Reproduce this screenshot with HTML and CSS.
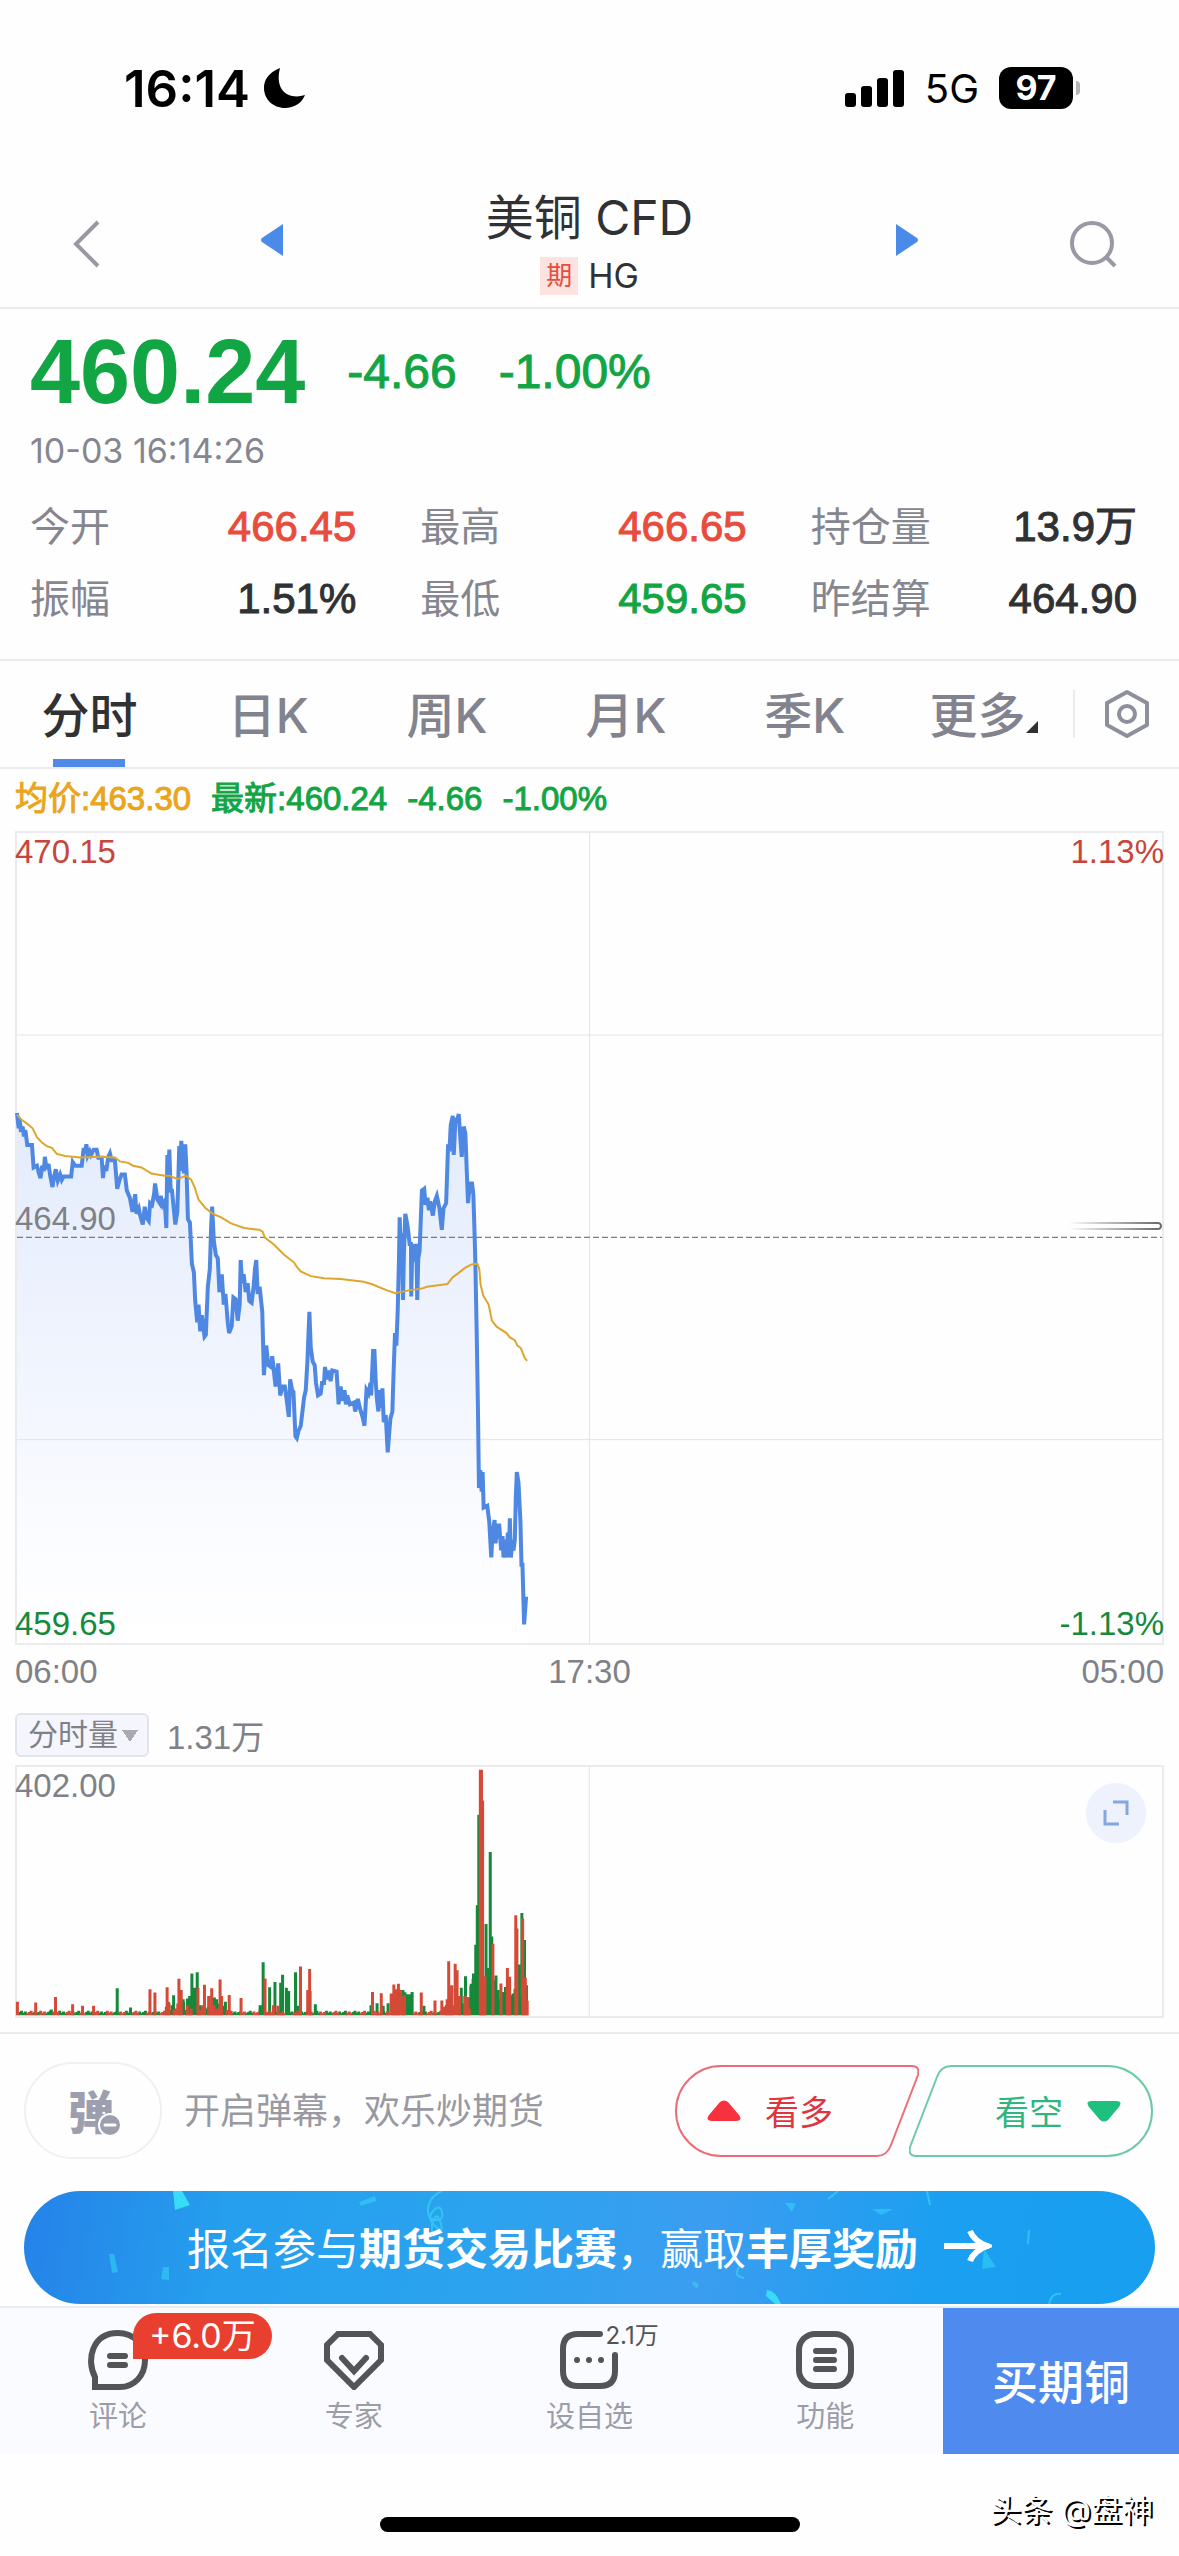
FILE: index.html
```html
<!DOCTYPE html>
<html lang="zh-CN">
<head>
    <meta charset="utf-8">
    <meta name="viewport" content="width=device-width">
    <title>美铜 CFD</title>

    <link rel="stylesheet" href="styles.css">
</head>
<body>

<div class="status-bar">
    <div class="status-time">
        16:14
        <svg width="42" height="40" viewBox="0 0 42 40"><path d="M16 0C4 5 0 12 0 20c0 11 9 20 21 20 9 0 17-5 20-13-15 5-31-3-25-27z"/></svg>
    </div>
    <div class="status-right">
        <svg width="60" height="38" viewBox="0 0 60 38"><rect y="24" width="11" height="14" rx="3"/><rect x="16" y="17" width="11" height="21" rx="3"/><rect x="32" y="9" width="11" height="29" rx="3"/><rect x="48" y="1" width="11" height="37" rx="3"/></svg>
        <span>5G</span>
        <span class="battery">97</span>
    </div>
</div>

<header class="header">
    <button class="icon-button" aria-label="返回">
        <svg width="30" height="48" viewBox="0 0 30 48" fill="none" stroke="#9999a6" stroke-width="4"><path d="M27 2 5 24l22 22"/></svg>
    </button>
    <div class="switcher">
        <button aria-label="上一个">
            <svg width="24" height="32" viewBox="0 0 24 32"><path fill="#4a8ae8" d="M22 0v32L1 18q-2-2 0-4z"/></svg>
        </button>
        <div class="title">
            <h1>美铜 CFD</h1>
            <div class="title-code"><span class="title-tag">期</span>HG</div>
        </div>
        <button aria-label="下一个">
            <svg width="24" height="32" viewBox="0 0 24 32"><path fill="#4a8ae8" d="M2 0v32l21-14q2-2 0-4z"/></svg>
        </button>
    </div>
    <button class="icon-button" aria-label="搜索">
        <svg width="48" height="48" viewBox="0 0 48 48" fill="none" stroke="#9999a6" stroke-width="4"><circle cx="23" cy="23" r="20"/><path d="m37 37 9 9"/></svg>
    </button>
</header>

<section class="quote">
    <div class="quote-price green">
        <strong>460.24</strong>
        <span>-4.66</span>
        <span>-1.00%</span>
    </div>
    <div class="quote-date">10-03 16:14:26</div>
    <dl class="stats">
        <div><dt>今开</dt><dd class="red">466.45</dd></div>
        <div><dt>最高</dt><dd class="red">466.65</dd></div>
        <div><dt>持仓量</dt><dd>13.9万</dd></div>
        <div><dt>振幅</dt><dd>1.51%</dd></div>
        <div><dt>最低</dt><dd class="green">459.65</dd></div>
        <div><dt>昨结算</dt><dd>464.90</dd></div>
    </dl>
</section>

<nav class="tabs">
    <button class="tab active">分时</button>
    <button class="tab">日K</button>
    <button class="tab">周K</button>
    <button class="tab">月K</button>
    <button class="tab">季K</button>
    <button class="tab tab-more">更多</button>
    <button class="tab-settings" aria-label="设置">
        <svg width="46" height="50" viewBox="0 0 46 50" fill="none" stroke="#8d8f9c" stroke-width="4"><path stroke-linejoin="round" d="m23 3 20 11v22L23 47 3 36V14z"/><circle cx="23" cy="25" r="8"/></svg>
    </button>
</nav>

<main class="charts">
    <div class="legend">
        <span class="orange">均价:463.30</span>
        <span class="green">最新:460.24</span>
        <span class="green">-4.66</span>
        <span class="green">-1.00%</span>
    </div>

    <div class="chart price-chart">
        <svg class="chart-svg" viewBox="0 0 3450 2274" preserveAspectRatio="none">
            <defs>
                <linearGradient id="area" x1="0" y1="0" x2="0" y2="1">
                    <stop offset="0" stop-color="#e3ebfc"/>
                    <stop offset="0.500" stop-color="#f1f5fe"/>
                    <stop offset="0.800" stop-color="#fbfcff"/>
                    <stop offset="1" stop-color="#fff"/>
                </linearGradient>
            </defs>
            <g transform="translate(-45 694)">
                <path fill="url(#area)" d="M45 92 70 140 76 182 90 182 95 245 116 275 129 215 152 300 162 250 186 270 208 270 213 230 240 240 246 190 285 195 304 275 325 205 340 225 347 305 370 265 393 370 424 405 461 290 490 340 495 415 504 195 522 405 540 170 552 180 560 390 582 620 610 720 633 355 655 595 684 710 697 610 710 675 719 505 745 620 766 505 784 650 789 828 810 805 824 860 852 860 864 945 868 840 888 1005 910 890 926 650 952 885 973 805 1008 818 1014 910 1048 910 1092 970 1118 760 1134 930 1146 865 1162 1045 1176 930 1192 650 1198 385 1208 617 1215 375 1233 607 1251 617 1265 310 1298 380 1310 325 1325 420 1338 345 1344 180 1358 100 1361 210 1376 95 1385 215 1391 130 1404 345 1420 320 1437 1145 1451 1200 1462 1195 1474 1340 1484 1235 1511 1340 1541 1320 1551 1100 1562 1240 1573 1528 1579 1450V1580H45z"/>
            </g>
            <g class="grid">
                <path d="M0 567H3450M0 1703H3450M1725 0V2274"/>
                <path class="grid-base" d="M0 1135H3450"/>
            </g>
            <g class="lines" transform="translate(-45 694)">
                <polyline class="line-price" points="45,92 50,135 53,110 57,145 62,130 66,158 70,140 76,182 90,182 95,245 105,240 110,258 116,275 121,240 126,255 129,215 134,250 140,235 145,268 152,300 157,270 162,250 168,282 175,265 180,280 186,270 208,270 213,230 220,240 240,240 246,190 250,205 254,180 258,212 264,200 268,210 276,195 285,195 290,218 300,218 304,275 308,240 314,255 320,215 325,205 330,225 340,225 347,305 354,280 360,265 370,265 376,310 385,330 393,370 401,320 405,375 412,360 416,380 424,405 430,355 434,385 442,395 446,345 452,350 458,320 461,290 468,335 475,345 478,325 484,350 490,340 495,415 498,210 501,260 504,195 508,310 512,310 522,405 528,370 534,185 537,240 540,170 543,255 546,180 548,262 552,180 556,260 560,390 566,400 572,515 578,540 582,620 588,680 592,630 597,705 602,660 610,720 614,715 620,580 626,530 630,410 633,355 638,450 644,490 650,500 655,595 662,545 668,630 673,600 680,680 684,710 692,690 697,610 704,615 710,675 716,630 719,505 723,570 728,545 734,595 740,570 745,620 752,625 758,580 762,530 766,505 770,600 776,580 784,650 789,828 796,745 802,800 810,805 814,775 824,860 832,795 838,885 845,860 852,860 858,900 864,945 868,840 874,870 878,875 884,1000 888,1005 893,985 900,970 905,930 910,890 915,870 920,790 926,650 930,750 936,790 942,800 946,850 952,885 960,880 964,850 970,850 973,805 978,840 984,815 990,845 995,815 1008,818 1014,910 1020,860 1026,900 1032,870 1036,910 1040,885 1048,910 1060,905 1064,930 1072,895 1078,920 1086,945 1092,970 1098,870 1104,880 1110,850 1112,885 1118,760 1122,760 1126,850 1130,900 1134,930 1138,870 1143,920 1146,865 1150,960 1156,940 1162,1045 1170,950 1176,930 1180,810 1184,710 1188,745 1192,650 1196,500 1198,385 1202,500 1205,430 1208,617 1211,480 1215,375 1222,410 1228,460 1232,460 1233,607 1236,470 1240,510 1244,465 1248,465 1251,617 1254,500 1258,480 1265,310 1272,305 1276,350 1282,330 1286,365 1290,340 1298,380 1304,340 1310,325 1318,360 1325,420 1330,360 1338,345 1344,180 1348,200 1352,125 1358,100 1361,210 1366,110 1372,110 1376,95 1380,150 1385,215 1391,130 1396,150 1400,250 1404,345 1410,290 1416,290 1420,320 1424,440 1426,510 1430,700 1434,930 1437,1145 1441,1095 1445,1155 1448,1100 1451,1200 1462,1195 1468,1240 1474,1340 1478,1270 1484,1235 1487,1300 1492,1250 1498,1250 1504,1320 1508,1280 1511,1340 1516,1290 1520,1340 1524,1270 1527,1340 1530,1230 1533,1340 1538,1290 1541,1320 1545,1290 1548,1170 1551,1100 1556,1130 1562,1240 1565,1360 1568,1360 1573,1528 1579,1450"/>
                <polyline class="line-average" points="45,97 60,112 75,122 92,135 105,160 120,175 135,185 150,190 165,207 190,213 235,217 290,215 340,217 355,228 380,232 395,240 420,245 450,262 490,268 505,268 528,278 555,268 570,280 580,300 592,335 612,358 635,375 660,385 690,402 730,415 775,420 785,425 792,442 820,462 850,490 880,512 888,524 900,537 930,550 970,556 1020,558 1090,566 1115,573 1160,590 1185,598 1225,590 1265,585 1280,580 1342,572 1358,553 1370,545 1395,527 1415,517 1432,515 1438,530 1442,575 1450,605 1466,630 1476,675 1490,692 1520,710 1530,722 1545,730 1553,745 1563,752 1575,780 1582,788"/>
            </g>
        </svg>
        <span class="axis top-left red">470.15</span>
        <span class="axis top-right red">1.13%</span>
        <span class="axis middle-left">464.90</span>
        <span class="axis bottom-left green">459.65</span>
        <span class="axis bottom-right green">-1.13%</span>
        <span class="handle"></span>
    </div>

    <div class="time-axis">
        <span>06:00</span>
        <span>17:30</span>
        <span>05:00</span>
    </div>

    <div class="volume-bar">
        <select class="volume-select" aria-label="指标">
            <option>分时量</option>
        </select>
        <span>1.31万</span>
    </div>

    <div class="chart volume-chart">
        <svg class="chart-svg" viewBox="0 0 3005 756" preserveAspectRatio="none">
            <path class="grid" d="M1502 0V756"/>
            <path class="volume-down" id="volume-down"/>
            <path class="volume-up" id="volume-up"/>
        </svg>
        <span class="axis top-left">402.00</span>
        <button class="expand" aria-label="全屏">
            <svg width="26" height="26" viewBox="0 0 26 26" fill="none" stroke="#84a8dc" stroke-width="3"><path d="M10 2h14v13M2 10v14h14"/></svg>
        </button>
    </div>
</main>

<section class="danmu">
    <button class="danmu-toggle" aria-label="弹幕开关">
        弹
        <svg class="danmu-off" width="24" height="24" viewBox="0 0 24 24"><circle cx="12" cy="12" r="11" fill="#9d9eae" stroke="#fff" stroke-width="2"/><path stroke="#fff" stroke-width="3" stroke-linecap="round" d="M7 12h10"/></svg>
    </button>
    <input class="danmu-input" type="text" aria-label="弹幕" placeholder="开启弹幕，欢乐炒期货">
    <div class="votes">
        <button class="vote vote-long">
            <svg class="vote-shape" viewBox="0 0 244 92" preserveAspectRatio="none"><path d="M46 1H237q8 0 6 9L216 80q-4 11-14 11H46A45 45 0 0 1 46 1z"/></svg>
            <svg width="34" height="22" viewBox="0 0 34 22"><path fill="#f8313f" d="M13 2q4-3 8 0l11 13q4 6-3 6H5q-7 0-3-6z"/></svg>
            看多
        </button>
        <button class="vote vote-short">
            <svg class="vote-shape" viewBox="0 0 244 92" preserveAspectRatio="none"><path d="M198 91H7q-8 0-6-9L28 12Q32 1 42 1H198a45 45 0 0 1 0 90z"/></svg>
            看空
            <svg width="34" height="22" viewBox="0 0 34 22"><path fill="#1fbf7e" d="M13 20q4 3 8 0L32 7q4-6-3-6H5Q-2 1 2 7z"/></svg>
        </button>
    </div>
</section>

<a class="banner" href="#">
    <svg class="confetti" viewBox="0 0 1131 113" preserveAspectRatio="none">
        <g fill="#38dcf6">
            <path d="M149 0h9l8 14-15 5zM751 113l-9-8 1-6q8 0 14 14z"/>
            <path opacity="0.500" d="m335 11 16-6 1 5-15 5zM85 63h5l4 18-6 1zM139 76h6v13l-8-1zM761 12h11l-4 9zM848 18h21l-12 6zM669 90l6 3-2 5-5-5zM960 58l12 18-14 2z"/>
        </g>
        <g fill="none" stroke="#38dcf6" stroke-width="2" opacity="0.600">
            <path d="M418 0q-14 6-14 20 0 9 8 9t6-8-8-2-3 11 8 8 1-8-8 4v7M716 75q-8 10 4 12M804 8l10-8M903 0l3 14M1005 39l-1 14M1025 113q3-12 12-10"/>
        </g>
    </svg>
    <span class="banner-text">报名参与<b>期货交易比赛</b>，赢取<b>丰厚奖励</b></span>
    <svg width="48" height="34" viewBox="0 0 48 34" fill="none" stroke="#fff" stroke-width="6"><path d="M0 17h45M26 2q4 10 17 15-13 5-17 15"/></svg>
</a>

<footer class="bottom-nav">
    <a class="nav-item" href="#">
        <svg width="60" height="60" viewBox="0 0 60 60"><path d="M7 57V47C-2 30 4 3 30 3c16 0 27 12 27 27 0 16-11 27-25 27z"/><path d="M22 26h15M22 35h15"/></svg>
        评论
        <span class="badge">+6.0万</span>
    </a>
    <a class="nav-item" href="#">
        <svg width="60" height="60" viewBox="0 0 60 60"><path d="M14 4h32l11 11v15L30 57 3 30V15z"/><path d="m18 28 12 13 12-13"/></svg>
        专家
    </a>
    <a class="nav-item" href="#">
        <svg width="60" height="60" viewBox="0 0 60 60"><path d="M41 4H19Q4 4 4 19v22q0 15 15 15h22q15 0 15-15V25"/><path d="M18 30h0M30 30h0M42 30h0"/></svg>
        设自选
        <span class="nav-count">2.1万</span>
    </a>
    <a class="nav-item" href="#">
        <svg width="60" height="60" viewBox="0 0 60 60"><rect x="4" y="4" width="52" height="52" rx="16"/><path d="M21 21h18M21 30h18M21 39h18"/></svg>
        功能
    </a>
    <button class="buy">买期铜</button>
</footer>

<div class="home-area">
    <div class="home-bar"></div>
    <span class="author">头条 @盘神</span>
</div>

<script>
    // Volume bars: [x, height], base line at 754

    const up = [[1,41],[49,39],[101,56],[146,34],[172,29],[201,29],[349,79],[362,69],[394,85],[399,37],[425,111],[431,77],[475,84],[492,93],[503,59],[511,82],[533,109],[537,59],[557,62],[588,53],[651,112],[673,31],[685,29],[744,148],[763,77],[768,141],[933,71],[956,67],[989,94],[995,79],[1001,96],[1007,77],[1061,69],[1097,45],[1115,45],[1129,49],[1133,164],[1141,91],[1150,157],[1155,137],[1161,59],[1175,59],[1216,746],[1219,746],[1222,652],[1228,119],[1249,217],[1270,97],[1287,144],[1293,117],[1309,304],[1312,264],[1327,294],[1334,114],[1339,44]];
    const down = [[90,18],[263,82],[298,24],[411,61],[436,49],[447,51],[453,59],[459,127],[466,84],[473,131],[481,31],[518,54],[524,49],[542,29],[638,31],[646,161],[663,85],[677,101],[692,99],[697,123],[707,84],[713,74],[731,131],[737,29],[769,74],[783,34],[929,31],[945,37],[961,29],[974,37],[1013,77],[1018,70],[1023,64],[1031,64],[1068,29],[1166,84],[1177,119],[1183,54],[1191,89],[1198,127],[1204,214],[1208,334],[1212,609],[1231,277],[1238,144],[1242,496],[1246,239],[1257,121],[1263,77],[1276,59],[1281,49],[1299,54],[1317,154],[1325,311],[1332,229]];

    // quiet minutes between the peaks
    for (let i = 0; i < 268; i++) {
        const x = 2 + i * 5;
        let height = 6 + (i * 7 % 5) * 2;
        if (x > 390 && x < 560) height += i * 11 % 30;
        if (x > 980 && x < 1040) height += 20 + i * 11 % 40;
        if (x > 1120 && x < 1190) height += i * 11 % 50;
        if (x > 1190 && x < 1260) height += 50 + i * 11 % 60;
        if (x >= 1260) height += 20 + i * 11 % 60;
        (i * 13 % 7 < 3 && x < 1190 ? up : down).push([x, height]);
    }

    drawBars('volume-up', up);
    drawBars('volume-down', down);

    function drawBars (id, bars) {
        const d = bars.map(bar => 'M' + bar[0] + ' 754v-' + bar[1]).join('');
        document.getElementById(id).setAttribute('d', d);
    }
</script>

</body>
</html>
```
FILE: styles.css
```css
* {
    box-sizing: border-box;
}

body {
    display: flex;
    flex-direction: column;
    margin: 0;
    min-height: 100vh;
    background: #fefefe;
    color: #303133;
    font-family: Inter, "Noto Sans CJK SC", sans-serif;
    font-size: 32px;
}

button, input, select {
    margin: 0;
    padding: 0;
    border: 0;
    background: none;
    color: inherit;
    font: inherit;
}

a {
    color: inherit;
    text-decoration: none;
}

.red { color: #e84c3c; }
.green { color: #12a544; }
.orange { color: #e9a51c; }

/* Status bar */

.status-bar {
    display: flex;
    justify-content: space-between;
    align-items: center;
    height: 176px;
    padding: 0 106px 0 124px;
    color: #000;
}

.status-time {
    display: flex;
    align-items: center;
    gap: 14px;
    font-size: 51px;
    font-weight: 600;
}

.status-right {
    display: flex;
    align-items: center;
    gap: 20px;
    font-size: 40px;
}

.battery {
    position: relative;
    width: 74px;
    border-radius: 12px;
    background: #000;
    color: #fff;
    font-size: 34px;
    font-weight: 700;
    line-height: 42px;
    text-align: center;
}
.battery::after {
    content: "";
    position: absolute;
    right: -7px;
    top: 14px;
    width: 4px;
    height: 14px;
    border-radius: 0 4px 4px 0;
    background: #b5b5b5;
}

/* Header */

.header {
    display: flex;
    align-items: center;
    height: 133px;
    padding: 4px 62px 0;
    border-bottom: 2px solid #ebebed;
}

.icon-button {
    display: flex;
    justify-content: center;
    align-items: center;
    width: 48px;
    height: 48px;
}

.switcher {
    display: flex;
    justify-content: space-between;
    align-items: center;
    flex: 1;
    margin: 0 151px;
}

.title {
    text-align: center;
}
.title h1 {
    margin: 0;
    font-size: 48px;
    font-weight: 400;
    line-height: 64px;
}
.title-code {
    display: flex;
    justify-content: center;
    align-items: center;
    gap: 10px;
    font-size: 34px;
    line-height: 52px;
}
.title-tag {
    width: 38px;
    background: #fde3e0;
    color: #e84c3c;
    font-size: 26px;
    line-height: 38px;
}

/* Quote */

.quote {
    padding: 14px 42px 0 30px;
    border-bottom: 2px solid #ebebed;
}

.quote-price {
    display: flex;
    align-items: center;
    gap: 42px;
    font-family: "Liberation Sans", sans-serif;
    font-size: 48px;
    line-height: 98px;
    -webkit-text-stroke: 1px;
}
.quote-price strong {
    font-size: 90px;
    -webkit-text-stroke: 0;
}

.quote-date {
    color: #85868f;
    font-size: 34px;
    line-height: 60px;
}

.stats {
    display: grid;
    grid-template-columns: 1fr 1fr 1fr;
    column-gap: 64px;
    margin: 10px 0 24px;
    font-size: 40px;
    line-height: 72px;
}
.stats div {
    display: flex;
    justify-content: space-between;
}
.stats dt {
    color: #85868f;
}
.stats dd {
    margin: 0;
    font-family: "Liberation Sans", "Noto Sans CJK SC", sans-serif;
    font-size: 42px;
    -webkit-text-stroke: 1px;
}

/* Tabs */

.tabs {
    display: flex;
    height: 108px;
    border-bottom: 2px solid #ebebed;
    color: #82838f;
    font-size: 48px;
    font-weight: 500;
}

.tab {
    position: relative;
    flex: 1;
    padding-bottom: 4px;
}
.tab.active {
    color: #303133;
}
.tab.active::after {
    content: "";
    position: absolute;
    left: 50%;
    bottom: 0;
    width: 72px;
    height: 8px;
    margin-left: -36px;
    background: #508ae6;
}
.tab-more::after {
    content: "";
    display: inline-block;
    border-bottom: 12px solid #303133;
    border-left: 12px solid transparent;
}

.tab-settings {
    display: flex;
    justify-content: center;
    align-items: center;
    width: 106px;
    height: 48px;
    margin: auto 0;
    border-left: 2px solid #ebebed;
}

/* Charts */

.charts {
    padding: 0 15px 14px;
    border-bottom: 2px solid #ebebed;
    color: #808187;
    font-family: "Liberation Sans", "Noto Sans CJK SC", sans-serif;
    font-size: 33px;
}

.legend {
    display: flex;
    gap: 20px;
    padding-bottom: 2px;
    line-height: 60px;
    -webkit-text-stroke: 1px;
}

.chart {
    position: relative;
    border: 2px solid #ebebed;
}
.chart-svg {
    display: block;
    width: 100%;
    height: 100%;
    overflow: visible;
}
.chart-svg path,
.chart-svg polyline {
    vector-effect: non-scaling-stroke;
}
.price-chart {
    height: 814px;
}
.volume-chart {
    height: 253px;
}

.grid {
    fill: none;
    stroke: #e4e4e7;
    stroke-width: 1px;
}
.grid-base {
    stroke: #5c5d60;
    stroke-dasharray: 6 3;
}
.lines {
    fill: none;
}
.line-price {
    stroke: #4f88e2;
    stroke-width: 4px;
}
.line-average {
    stroke: #dda62d;
    stroke-width: 2px;
}
.volume-up,
.volume-down {
    stroke: #d44a37;
    stroke-width: 3px;
}
.volume-down {
    stroke: #14893a;
}

.axis {
    position: absolute;
    line-height: 38px;
}
.axis.red { color: #c9443a; }
.axis.green { color: #158a3c; }
.top-left { top: 0; left: -2px; }
.top-right { top: 0; right: -2px; }
.middle-left { bottom: 50%; left: -2px; }
.bottom-left { bottom: 0; left: -2px; }
.bottom-right { bottom: 0; right: -2px; }

.handle {
    position: absolute;
    right: 0;
    bottom: 51%;
    width: 94px;
    height: 8px;
    border: 2px solid #666;
    border-radius: 4px;
    -webkit-mask: linear-gradient(to right, transparent, #000);
    mask: linear-gradient(to right, transparent, #000);
}

.time-axis {
    display: flex;
    justify-content: space-between;
    line-height: 54px;
}

.volume-bar {
    display: flex;
    align-items: center;
    gap: 18px;
    height: 66px;
    padding-top: 6px;
}

.volume-select {
    width: 134px;
    height: 44px;
    padding-left: 11px;
    border: 2px solid #e2e4ec;
    border-radius: 6px;
    appearance: none;
    background:
        linear-gradient(to bottom right, #a9aab0 50%, transparent 50%) 113px 15px / 8px 12px no-repeat,
        linear-gradient(to bottom left, #a9aab0 50%, transparent 50%) 105px 15px / 8px 12px no-repeat,
        #f5f6fd;
    font-size: 30px;
    line-height: 40px;
}

.expand {
    position: absolute;
    top: 16px;
    right: 16px;
    display: flex;
    justify-content: center;
    align-items: center;
    width: 60px;
    height: 60px;
    border-radius: 50%;
    background: #edf2fd;
}

/* Danmu */

.danmu {
    display: flex;
    align-items: center;
    padding: 28px 26px 32px 24px;
}

.danmu-toggle {
    position: relative;
    width: 138px;
    height: 97px;
    padding: 0 4px 4px 0;
    border: 2px solid #f0f0f2;
    border-radius: 49px;
    color: #9d9eae;
    font-size: 46px;
    font-weight: 900;
}
.danmu-off {
    position: absolute;
    right: 38px;
    bottom: 20px;
}

.danmu-input {
    flex: 1;
    min-width: 0;
    margin-left: 22px;
    font-size: 36px;
}
.danmu-input::placeholder {
    color: #9899a2;
}

.votes {
    display: flex;
}
.vote {
    position: relative;
    display: flex;
    align-items: center;
    gap: 24px;
    width: 244px;
    height: 92px;
    padding: 0 32px;
    font-size: 34px;
}
.vote-shape {
    position: absolute;
    left: 0;
    top: 0;
    width: 100%;
    height: 100%;
    fill: none;
    stroke: currentColor;
    stroke-width: 2px;
    opacity: 0.7;
}
.vote-long {
    color: #e0343f;
}
.vote-short {
    justify-content: flex-end;
    margin-left: -10px;
    color: #2fb67f;
}

/* Banner */

.banner {
    position: relative;
    display: flex;
    justify-content: center;
    align-items: center;
    gap: 26px;
    height: 113px;
    margin: 0 24px 2px;
    padding-bottom: 4px;
    border-radius: 57px;
    background: linear-gradient(100deg, #2582e8, #259fee 18%, #2ba3ee 40%, #3b9df0 60%, #1c9ff0 80%, #189ff0);
    color: #fff;
    font-size: 43px;
    overflow: hidden;
}
.banner-text {
    position: relative;
}
.confetti {
    position: absolute;
    left: 0;
    top: 0;
    width: 100%;
    height: 100%;
}

/* Bottom nav */

.bottom-nav {
    display: flex;
    height: 148px;
    border-top: 2px solid #e6edf5;
    background: #fafbff;
}

.nav-item {
    position: relative;
    flex: 1;
    display: flex;
    flex-direction: column;
    align-items: center;
    padding-top: 22px;
    color: #9c9da8;
    font-size: 29px;
    line-height: 54px;
}
.nav-item svg {
    fill: none;
    stroke: #535456;
    stroke-width: 6px;
    stroke-linecap: round;
}

.badge {
    position: absolute;
    left: 50%;
    top: 5px;
    margin-left: 15px;
    padding: 0 16px;
    border-radius: 23px 23px 23px 0;
    background: #e83f2f;
    color: #fff;
    font-size: 34px;
    line-height: 46px;
    white-space: nowrap;
}
.nav-count {
    position: absolute;
    left: 50%;
    top: 6px;
    margin-left: 16px;
    color: #535456;
    font-size: 24px;
    line-height: 44px;
}

.buy {
    width: 20%;
    padding-bottom: 4px;
    background: #4f8bee;
    color: #fff;
    font-size: 46px;
    font-weight: 500;
}

/* Home indicator */

.home-area {
    position: relative;
    flex: 1;
    display: flex;
    justify-content: center;
    align-items: flex-end;
    min-height: 100px;
    padding-bottom: 24px;
}
.home-bar {
    width: 420px;
    height: 15px;
    border-radius: 8px;
    background: #000;
}
.author {
    position: absolute;
    right: 26px;
    bottom: 26px;
    color: #fff;
    font-size: 31px;
    line-height: 40px;
    text-shadow: 2px 2px 0 #000;
}
```
